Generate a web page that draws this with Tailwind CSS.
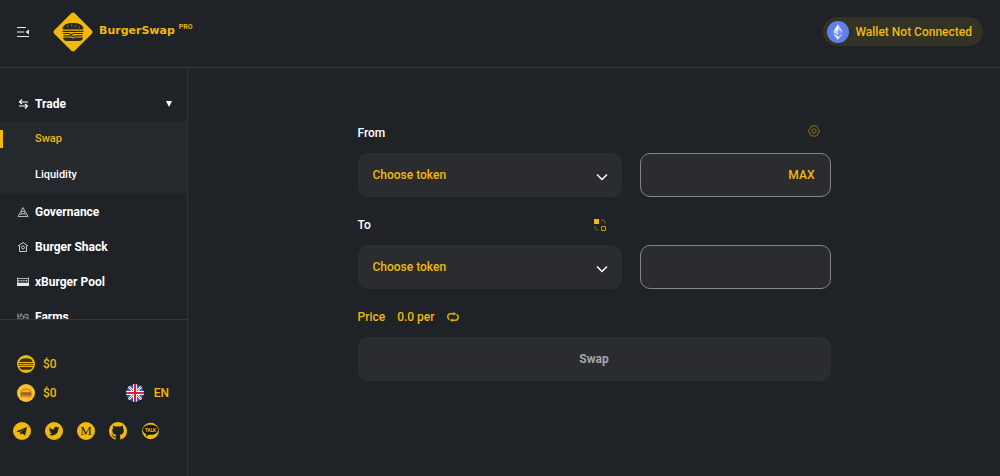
<!DOCTYPE html>
<html lang="en">
<head>
    <meta charset="UTF-8">
    <meta name="viewport" content="width=device-width, initial-scale=1.0">
    <title>BurgerSwap</title>
    <script src="https://cdn.jsdelivr.net/npm/@tailwindcss/browser@4"></script>
</head>
<body class="flex h-screen flex-col overflow-hidden bg-[#1f2226] font-['Roboto',sans-serif] text-xs font-medium text-white">
    <!-- Header -->
    <header class="flex h-[68px] shrink-0 items-center border-b border-[#35383c] px-[17px] pb-1">
        <button type="button" aria-label="Collapse menu">
            <svg class="size-3" viewBox="0 0 12 12" fill="none" stroke="#e8e8e8" stroke-width="1.2"><path d="M0 1.500h9M0 6h7M0 10.500h12"/><path d="M12 3.500v5L8.500 6z" fill="#e8e8e8" stroke="none"/></svg>
        </button>
        <a href="#" class="ml-6 flex items-center text-[#f0b90b]">
            <svg class="size-10" viewBox="0 0 40 40">
                <path d="M18 1.500q2-2 4 0L38.500 18q2 2 0 4L22 38.500q-2 2-4 0L1.500 22q-2-2 0-4z" fill="#f0b90b"/>
                <g fill="none" stroke="#2b2a1c">
                    <path d="M10 17c0-4 4-5.500 10-5.500S30 13 30 17z" fill="#2b2a1c"/>
                    <path d="M14 14.500l1-.5M18 13.500l1-.5M22 14l1 .5M26 15l1 .5" stroke="#f0b90b" stroke-width=".7"/>
                    <path d="M9.500 19.300h21M10 21.500h6l2 1 3-1h9M10.500 23.800h8l2 1 2-1h7" stroke-width="1.200"/>
                    <path d="M10 25.500h8l2 1 2-1h8c0 2.500-2 3.500-4 3.500H14c-2 0-4-1-4-3.500z" fill="#2b2a1c" stroke="none"/>
                </g>
            </svg>
            <span class="ml-[6px] font-['DejaVu_Sans',sans-serif] text-[11px] font-bold">BurgerSwap</span>
            <span class="mb-2 ml-1 text-[7px] font-semibold">PRO</span>
        </a>
        <button type="button" class="ml-auto flex h-[29px] items-center gap-[6px] rounded-full bg-[#343125] pr-[11px] pl-1 text-[#f0b90b]">
            <svg class="size-[22px]" viewBox="0 0 22 22"><circle cx="11" cy="11" r="11" fill="#627eea"/><path d="M11 3v6l5 2.300z" fill="#c8d2f8"/><path d="M11 3l-5 8.300L11 9z" fill="#fff"/><path d="M6 11.300L11 9v5.300z" fill="#cdd6f9"/><path d="M16 11.300L11 9v5.300z" fill="#8197ee"/><path d="M6 12.500l5 3V19z" fill="#fff"/><path d="M16 12.500l-5 3V19z" fill="#c8d2f8"/></svg>
            Wallet Not Connected
        </button>
    </header>

    <div class="flex min-h-0 flex-1">
        <!-- Sidebar -->
        <aside class="flex w-[188px] shrink-0 flex-col border-r border-[#303337]">
            <nav class="min-h-0 flex-1 overflow-hidden pt-[18px] font-bold">
                <button type="button" class="flex h-[35px] w-full items-center gap-[6px] pr-[15px] pl-[17px]">
                    <svg class="size-3" viewBox="0 0 12 12" fill="none" stroke="#fff" stroke-width="1.200"><path d="M11 4H2.500M5 1.500L2.500 4 5 6M2 8h8.500M8 6l2.500 2L8 10.500"/></svg>
                    Trade
                    <svg class="ml-auto size-[6px]" viewBox="0 0 6 6" fill="#fff"><path d="M0 0h6L3 6z"/></svg>
                </button>
                <ul class="mb-px bg-[#25282c] text-[11px] font-medium">
                    <li><a href="#" class="flex h-9 items-center text-[#f0b90b]"><span class="mr-8 h-[18px] w-[3px] bg-[#f0b90b]"></span>Swap</a></li>
                    <li><a href="#" class="flex h-9 items-center pl-[35px]">Liquidity</a></li>
                </ul>
                <a href="#" class="flex h-[35px] items-center gap-[6px] pl-[17px]">
                    <svg class="size-3" viewBox="0 0 12 12" fill="none" stroke="#c8c9ca" stroke-width=".9"><path d="M6 1.500l5 9H1z" stroke-linejoin="round"/><circle cx="6" cy="6.500" r="1.500"/><path d="M3 9l2-1.500M9 9L7 7.500"/></svg>
                    Governance
                </a>
                <a href="#" class="flex h-[35px] items-center gap-[6px] pl-[17px]">
                    <svg class="size-3" viewBox="0 0 12 12" fill="none" stroke="#c8c9ca" stroke-width="1"><path d="M1 5l5-3.500L11 5M2.500 4.500v6h7v-6"/><circle cx="6" cy="6.500" r="1.500"/></svg>
                    Burger Shack
                </a>
                <a href="#" class="flex h-[35px] items-center gap-[6px] pl-[17px]">
                    <svg class="size-3" viewBox="0 0 12 12" fill="none" stroke="#d8d8d8"><path d="M.5 1.500v8M11.500 1.500v8M0 2.500h12" stroke-width=".8"/><path d="M1 4.500h10M1 6h10" stroke-width=".9" stroke-dasharray="1 .6"/><path d="M0 7h12v3H0z" fill="#e8e8e8" stroke="none"/></svg>
                    xBurger Pool
                </a>
                <a href="#" class="flex h-[35px] items-center gap-[6px] pl-[17px]">
                    <svg class="size-3" viewBox="0 0 12 12" fill="none" stroke="#a0a1a3" stroke-width=".9"><path d="M1 2.500v7M0 4l3 2 1-3.500L6 6l2-2.500h3V8M1 8h5"/><circle cx="8" cy="8" r="2"/></svg>
                    Farms
                </a>
            </nav>

            <div class="border-t border-[#35383c] pt-[35px] pb-9 text-[#f0b90b]">
                <div class="flex h-[18px] items-center gap-2 pl-[17px]">
                    <svg class="size-[18px]" viewBox="0 0 18 18"><circle cx="9" cy="9" r="9" fill="#f0b90b"/><path d="M2.500 7c.3-3 3-3.800 6.500-3.800s6.200.8 6.500 3.800z" fill="#3a3412"/><path d="M1.500 8.500h15M1.500 10.300h6l1.500.7 1.500-.7h6" fill="none" stroke="#3a3412" stroke-width=".9"/><path d="M2.500 12h13c-.5 2-1.500 2.800-3.500 2.800H6C4 14.800 3 14 2.500 12z" fill="#3a3412"/></svg>
                    $0
                </div>
                <div class="mt-[11px] flex h-[18px] items-center gap-2 pr-[18px] pl-[17px]">
                    <svg class="size-[18px]" viewBox="0 0 18 18"><circle cx="9" cy="9" r="9" fill="#fbc02d"/><path d="M4 8.500C4 6 6 5 9 5s5 1 5 3.500z" fill="#f9ae1c" stroke="#a8691c" stroke-width=".7"/><path d="M3.500 8.700h11v2.600h-11z" fill="#8f5a2a"/><path d="M4.500 10h9" stroke="#d8892b" stroke-width=".8" stroke-dasharray="1 1"/><path d="M4 11.500h10V13H4z" fill="#f09a1b" stroke="#a8691c" stroke-width=".5"/></svg>
                    $0
                    <button type="button" class="ml-auto flex items-center gap-[10px]">
                        <svg class="size-[18px] rounded-full" viewBox="0 0 18 18"><path d="M0 0h18v18H0z" fill="#1f5ba8"/><path d="M0 0l18 18M18 0L0 18" stroke="#fff" stroke-width="2.500"/><path d="M0 0l18 18M18 0L0 18" stroke="#d8203e" stroke-width=".8"/><path d="M9 0v18M0 9h18" stroke="#fff" stroke-width="4"/><path d="M9 0v18M0 9h18" stroke="#d8203e" stroke-width="2.200"/></svg>
                        EN
                    </button>
                </div>
                <div class="mt-5 flex gap-[14px] pl-[13px]">
                    <a href="#" aria-label="Telegram"><svg class="size-[18px]" viewBox="0 0 18 18"><circle cx="9" cy="9" r="9" fill="#f0b90b"/><path d="M3.500 9.300L14 5l-2 8.500-3-2.200-1.500 1.700-.3-2.700L12 6.800l-6 3.500z" fill="#24231f"/></svg></a>
                    <a href="#" aria-label="Twitter"><svg class="size-[18px]" viewBox="0 0 18 18"><circle cx="9" cy="9" r="9" fill="#f0b90b"/><path transform="translate(3.800 3.800) scale(.44)" d="M24 4.600a10 10 0 0 1-2.800.8 5 5 0 0 0 2.100-2.700 10 10 0 0 1-3.100 1.200 4.900 4.900 0 0 0-8.400 4.500A14 14 0 0 1 1.700 3.200a4.900 4.900 0 0 0 1.500 6.500 5 5 0 0 1-2.200-.6 4.900 4.900 0 0 0 3.900 4.900 5 5 0 0 1-2.200.1 4.900 4.900 0 0 0 4.600 3.400A9.900 9.900 0 0 1 0 19.500a14 14 0 0 0 21.500-12.400A10 10 0 0 0 24 4.600z" fill="#24231f"/></svg></a>
                    <a href="#" aria-label="Medium" class="flex size-[18px] items-center justify-center rounded-full bg-[#f0b90b] font-['Liberation_Serif',serif] text-[13px] text-[#24231f]">M</a>
                    <a href="#" aria-label="GitHub"><svg class="size-[18px]" viewBox="0 0 16 16" fill="#f0b90b"><path d="M8 0C3.580 0 0 3.580 0 8c0 3.540 2.290 6.530 5.470 7.590.4.070.55-.17.55-.38 0-.19-.01-.82-.01-1.490-2.010.37-2.530-.49-2.690-.94-.09-.23-.48-.94-.82-1.130-.28-.15-.68-.52-.01-.53.63-.01 1.080.58 1.230.82.72 1.210 1.870.87 2.330.66.07-.52.28-.87.51-1.070-1.780-.2-3.640-.89-3.640-3.950 0-.87.31-1.590.82-2.150-.08-.2-.36-1.020.08-2.120 0 0 .67-.21 2.200.82a7.400 7.400 0 0 1 4 0c1.530-1.040 2.200-.82 2.200-.82.44 1.100.16 1.920.08 2.120.51.56.82 1.270.82 2.150 0 3.070-1.870 3.750-3.650 3.950.29.25.54.73.54 1.480 0 1.070-.01 1.930-.01 2.200 0 .21.15.46.55.38A8 8 0 0 0 16 8c0-4.420-3.580-8-8-8z"/></svg></a>
                    <a href="#" aria-label="KakaoTalk"><svg class="size-[18px]" viewBox="0 0 18 18"><circle cx="9.500" cy="9" r="8.300" fill="#f0b90b"/><path d="M9.500 2.800c-4.500 0-7.500 2.200-7.500 5.100 0 2 1.300 3.500 3.300 4.300l-.6 2.500 3.200-2c5 .6 9.100-1.500 9.100-4.800 0-2.900-3-5.100-7.500-5.100z" fill="#17160f"/><text x="9.500" y="9.500" text-anchor="middle" font-size="4.500" font-weight="800" fill="#f0b90b">TALK</text></svg></a>
                </div>
            </div>
        </aside>

        <!-- Swap form -->
        <main class="min-w-0 flex-1 overflow-hidden pt-[55px]">
            <form class="mx-auto w-full max-w-[473px]">
                <div class="flex h-5 items-center justify-between pr-[11px]">
                    <label for="from-token">From</label>
                    <button type="button" aria-label="Settings" class="mb-1">
                        <svg class="size-3" viewBox="0 0 12 12" fill="none" stroke="#8f7214"><path d="M3.300 1h5.400L11.500 6l-2.800 5H3.300L.5 6z"/><circle cx="6" cy="6" r="2.200"/></svg>
                    </button>
                </div>
                <div class="mt-[10px] grid grid-cols-[264fr_191fr] gap-[18px]">
                    <div class="relative min-w-0">
                        <select id="from-token" class="h-11 w-full appearance-none rounded-[10px] bg-[#2a2c30] px-[15px] text-[#f0b90b]"><option>Choose token</option></select>
                        <svg class="pointer-events-none absolute top-[18px] right-[14px] size-3" viewBox="0 0 12 12" fill="none" stroke="#fff" stroke-width="1.500"><path d="M1 3.500l5 5 5-5"/></svg>
                    </div>
                    <div class="flex h-11 min-w-0 items-center rounded-[10px] border border-[#85868a] bg-[#2a2c30] px-[15px]">
                        <input type="text" aria-label="From amount" class="h-full w-full min-w-0 flex-1 outline-none">
                        <button type="button" class="text-[#f0b90b]">MAX</button>
                    </div>
                </div>

                <div class="mt-[18px] grid grid-cols-[264fr_191fr] gap-[18px]">
                    <div class="flex h-5 items-center justify-between pr-4">
                        <label for="to-token">To</label>
                        <button type="button" aria-label="Switch tokens">
                            <svg class="size-3" viewBox="0 0 12 12" fill="none" stroke="#b98f10"><path d="M0 0h5v5H0z" fill="#f0b90b" stroke="none"/><path d="M7.500 7.500h4v4h-4z" stroke="#c99b0d"/><path d="M7.500 1H9l2 1.500V5M1 7.500V9l1.500 2H5" stroke-dasharray="2 1"/></svg>
                        </button>
                    </div>
                </div>
                <div class="mt-[10px] grid grid-cols-[264fr_191fr] gap-[18px]">
                    <div class="relative min-w-0">
                        <select id="to-token" class="h-11 w-full appearance-none rounded-[10px] bg-[#2a2c30] px-[15px] text-[#f0b90b]"><option>Choose token</option></select>
                        <svg class="pointer-events-none absolute top-[18px] right-[14px] size-3" viewBox="0 0 12 12" fill="none" stroke="#fff" stroke-width="1.500"><path d="M1 3.500l5 5 5-5"/></svg>
                    </div>
                    <input type="text" aria-label="To amount" class="h-11 w-full min-w-0 rounded-[10px] border border-[#85868a] bg-[#2a2c30] px-[15px] outline-none">
                </div>

                <div class="mt-[18px] flex h-5 items-center text-[#f0b90b]">
                    <span class="mr-3">Price</span>
                    <span>0.0 per</span>
                    <button type="button" aria-label="Invert price" class="ml-3">
                        <svg class="size-3" viewBox="0 0 12 12" fill="none" stroke="#e0ad0c" stroke-width="1.500"><path d="M2.500 8.500C0 7.500 0 3 3.500 2.800H8M9.500 3.500c2.500 1 2.500 5.500-1 5.700H4"/><path d="M6.500 1.300l2 1.500-2 1.500" stroke-width="1"/><path d="M5.500 10.700l-2-1.500 2-1.500" stroke-width="1"/></svg>
                    </button>
                </div>
                <button type="submit" disabled class="mt-[10px] h-11 w-full rounded-[10px] bg-[#2a2c30] font-bold text-[#a5a6a8]">Swap</button>
            </form>
        </main>
    </div>
</body>
</html>
